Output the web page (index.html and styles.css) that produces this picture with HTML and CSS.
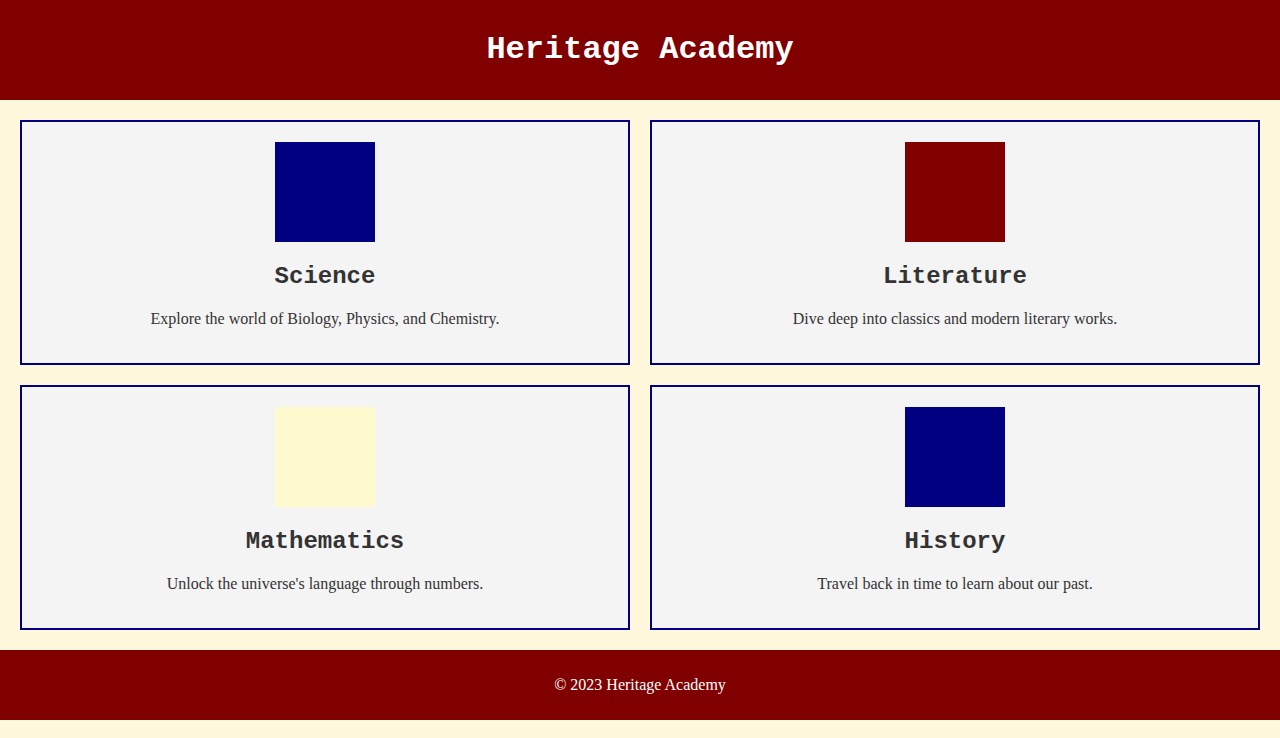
FILE: index.html
```html
<!DOCTYPE html>
<html lang="en">
<head>
<meta charset="utf-8">
<title>Heritage Academy</title>
<link rel="stylesheet" href="styles.css">
</head>
<body>
<header class="site-header">
  <h1 class="site-title">Heritage Academy</h1>
</header>
<main class="courses">
  <section class="card">
    <div class="swatch swatch-navy"></div>
    <h2 class="card-title">Science</h2>
    <p class="card-text">Explore the world of Biology, Physics, and Chemistry.</p>
  </section>
  <section class="card">
    <div class="swatch swatch-maroon"></div>
    <h2 class="card-title">Literature</h2>
    <p class="card-text">Dive deep into classics and modern literary works.</p>
  </section>
  <section class="card">
    <div class="swatch swatch-cream"></div>
    <h2 class="card-title">Mathematics</h2>
    <p class="card-text">Unlock the universe's language through numbers.</p>
  </section>
  <section class="card">
    <div class="swatch swatch-navy"></div>
    <h2 class="card-title">History</h2>
    <p class="card-text">Travel back in time to learn about our past.</p>
  </section>
</main>
<footer class="site-footer">
  <p class="footer-text">&copy; 2023 Heritage Academy</p>
</footer>
</body>
</html>
```
FILE: styles.css
```css
html {
  background: #fff8dc;
}
body {
  margin: 0;
  background: #fff8dc;
  font-family: "Liberation Serif", "Times New Roman", serif;
  color: #333;
}
.site-header {
  background: #800000;
  padding: 32px 0;
  text-align: center;
}
.site-title {
  margin: 0;
  color: #fff;
  font-family: "Liberation Mono", "Courier New", monospace;
  font-size: 32px;
  line-height: 36px;
  font-weight: bold;
}
.courses {
  display: grid;
  grid-template-columns: 1fr 1fr;
  gap: 20px;
  padding: 20px;
}
.card {
  background: #f4f4f4;
  border: 2px solid #000080;
  padding: 20px;
  text-align: center;
}
.swatch {
  width: 100px;
  height: 100px;
  margin: 0 auto;
}
.swatch-navy { background: #000080; }
.swatch-maroon { background: #800000; }
.swatch-cream { background: #fffacd; }
.card-title {
  margin: 21px 0 20px;
  font-family: "Liberation Mono", "Courier New", monospace;
  font-size: 24px;
  font-weight: bold;
  color: #333;
}
.card-text {
  margin: 0 0 15px;
  font-size: 16px;
  color: #333;
}
.site-footer {
  background: #800000;
  padding: 25px 0;
  text-align: center;
}
.footer-text {
  margin: 0;
  color: #fff;
  font-size: 16px;
  line-height: 20px;
}
```
